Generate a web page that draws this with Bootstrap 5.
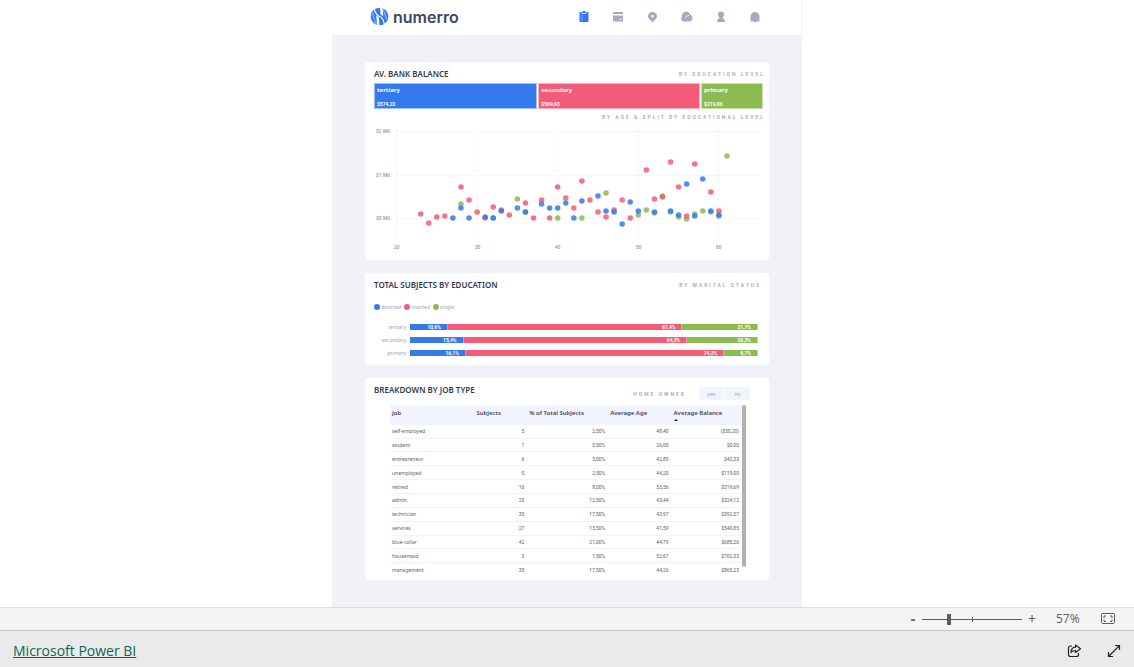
<!DOCTYPE html>
<html lang="en">
<head>
<meta charset="utf-8">
<meta name="viewport" content="width=device-width, initial-scale=1">
<title>Numerro - Microsoft Power BI</title>
<link href="https://cdn.jsdelivr.net/npm/bootstrap@5.3.0/dist/css/bootstrap.min.css" rel="stylesheet">
<style>
:root{--blue:#347aee;--red:#f45b77;--green:#8cbc4f;--muted:#9aa3bd;--ink:#3b3f55}
body{font-family:"Noto Sans","Open Sans",sans-serif;background:#fff;color:var(--ink)}
.report{max-width:470px;background:#f0f2f8;padding-bottom:26px}
.topbar{background:#fff;height:35px;padding:0 39px 2px 38px;border-right:1px solid #eef0f6}
.brand{font:600 16px/20px Inter,sans-serif;color:#3d4466;gap:4px;text-decoration:none}
.tabs{gap:20px}
.tabs a{display:block;width:14px;height:14px;line-height:0;color:#a5abbd}
.tabs a.current{color:var(--blue)}
.panels{padding:27px 33px 0;gap:13px}
.panel{background:#fff;border-radius:3px;padding:0 6px 0 9px}
.panel h2{font-size:8px;line-height:12px;font-weight:600;margin:0;color:#33384d}
.panel-head{padding-top:6px}
.balance-head{padding-bottom:3px}
.caption-text{font:500 5px/8px Roboto,sans-serif;letter-spacing:2px;margin-right:-2px;color:var(--muted);text-transform:uppercase;white-space:nowrap}
.tree{height:26px;gap:1px}
.tree div{padding:2px 2px 0;border:1px solid #ffffff88;color:#fff;font-size:6px;line-height:8px;font-weight:700;display:flex;flex-direction:column;justify-content:space-between;min-width:0}
.tree span{font:700 5px/8px Roboto,sans-serif}
.fill-blue{background-color:var(--blue)}.fill-red{background-color:var(--red)}.fill-green{background-color:var(--green)}
.plot text{font:500 5px Roboto,sans-serif;fill:#8d96b3}
.plot line{stroke:#e4e5e9;stroke-dasharray:1 3}
.key{gap:3px;font-size:5px;line-height:8px;color:var(--muted)}
.key i{display:inline-block;width:6px;height:6px;border-radius:50%;margin-right:1px;vertical-align:-1px}
.stacks{display:grid;grid-template-columns:32px 1fr;column-gap:4px;row-gap:5px;padding-right:5px;font-size:5px;line-height:8px;color:var(--muted);text-align:right}
.stack-bar{height:8px;padding:1px 0}
.stack-bar div{color:#fff;font:700 5px/6px Roboto,sans-serif;padding-right:6px;border-right:1px solid #ffffff66}
.home{gap:1px;height:16px;padding:3px 13px 0 0}
.home .caption-text{margin-right:12px}
.home button{border:0;border-radius:0;background:#f1f3fe;color:var(--muted);font-size:5px;line-height:8px;width:25px;height:13px;padding:0}
.job-area{padding:5px 17px 4px 16px}
.jobs{height:171px;flex:1;font-size:5px;line-height:8px;border-collapse:collapse;table-layout:fixed;color:#5b5e69}
.jobs th{background:#f1f3fe;height:20px;padding:0 2px;font-size:6px;font-weight:600;color:#41455c;position:relative;white-space:nowrap}
.jobs thead th{padding-bottom:4px}
.jobs th svg{position:absolute;left:2px;bottom:4px}
.jobs td{padding:0 3px;text-align:right;font:400 5px/8px Roboto,sans-serif;border-bottom:1px solid #f1f3fb}
.jobs tbody th{background:none;height:auto;font-size:5px;font-weight:400;color:#5b5e69;border-bottom:1px solid #f1f3fb}
.jobs tr:last-child>td,.jobs tbody tr:last-child>th{border-bottom:0}
.scroll-rail{width:4px;height:162px;border-radius:2px;background:#b3b0ad}
.zoombar{height:24px;background:#f4f4f4;border-top:1px solid #dcdcdc;border-bottom:1px solid #c6c6c6;padding-right:19px;color:#605e5c}
.zoombar button,.embedbar button{border:0;background:none;padding:0;color:inherit;line-height:0}
.zoombar .step{font-size:14px;line-height:20px;width:10px}
.zoom-range{-webkit-appearance:none;appearance:none;width:100px;height:11px;margin:0 5px 0 4px;background:linear-gradient(#605e5c,#605e5c) 50% 50%/1px 5px no-repeat,linear-gradient(#605e5c,#605e5c) 0 50%/100% 1px no-repeat}
.zoom-range::-webkit-slider-thumb{-webkit-appearance:none;width:4px;height:11px;background:#605e5c}
.zoombar output{font:400 12px/20px "Open Sans",sans-serif;width:26px;margin:0 19px;color:#605e5c}
.embedbar{height:36px;background:#eaeaea;padding:3px 13px 0;color:#222}
.embedbar a{font:400 14px/18px "Open Sans",sans-serif;color:#0b6657}
</style>
</head>
<body class="d-flex flex-column min-vh-100">
<main class="flex-grow-1 d-flex justify-content-center">
 <div class="report w-100">
  <header class="topbar d-flex align-items-center justify-content-between">
   <a class="brand d-flex align-items-center" href="#">
    <svg width="19" height="19" viewBox="0 0 19 19" aria-hidden="true"><defs><clipPath id="disc"><circle cx="9.500" cy="9.500" r="8.800"/></clipPath></defs><g clip-path="url(#disc)"><path fill="#347aee" d="M0 0h19v19H0z"/><path fill="#fff" d="M6.200 8.500l2.600 1.800L9.500 19H7.200zM10 0h2.400l.8 9-2.600-1.500z"/><path fill="none" stroke="#fff" stroke-width="1.100" d="M4 1.500C5.500 7 8 9 9.700 9.500S13.500 12 14.500 18"/><path fill="none" stroke="#c4daff" stroke-width=".8" d="M2.500 6c1 5 2 8 4.500 12M12 1c2.500 4 3.500 7 4.500 11"/></g></svg>
    numerro</a>
   <nav class="tabs d-flex" aria-label="Report pages">
    <a class="current" href="#" aria-label="Overview"><svg width="14" height="14" viewBox="0 0 14 14"><path fill="currentColor" d="M1.500 2h9v10h-9z"/><path stroke="#d8e5ff" d="M4 1v2.500h4V1" fill="none"/><path stroke="#8fb8f8" stroke-width=".8" d="M4 5v6" fill="none"/><path fill="currentColor" d="M4.500 1h3v2h-3z"/></svg></a>
    <a href="#" aria-label="Cards"><svg width="14" height="14" viewBox="0 0 14 14"><path fill="currentColor" d="M1 2h10v2H1zM1 5.500h10v6H1z"/><path fill="#eceef4" d="M7.500 8.500h2v1.500h-2z"/></svg></a>
    <a href="#" aria-label="Locations"><svg width="14" height="14" viewBox="0 0 14 14"><path fill="currentColor" fill-rule="evenodd" d="M6.500 2C3.800 2 2 3.800 2 6.200c0 2.600 3 3.800 4.500 6.300C8 10 11 8.800 11 6.200 11 3.800 9.200 2 6.500 2zm0 3a1.300 1.300 0 1 1 0 2.600 1.300 1.300 0 0 1 0-2.600z"/></svg></a>
    <a href="#" aria-label="Cloud"><svg width="14" height="14" viewBox="0 0 14 14"><path fill="currentColor" d="M4 11.500a2.700 2.700 0 0 1-2-4.700 4 4 0 0 1 8-2.300 3.700 3.700 0 0 1 .2 7z"/><path fill="none" stroke="#fff" stroke-width=".9" d="M5.500 8c.3-1.300 1.500-2.300 3.500-2.600"/></svg></a>
    <a href="#" aria-label="Profile"><svg width="14" height="14" viewBox="0 0 14 14"><circle cx="7" cy="4.500" r="3" fill="currentColor"/><path fill="currentColor" d="M5.500 6.500h3L9 8.500c1.300.6 2 1.500 2 3.500H3c0-2 .7-2.900 2-3.500z"/></svg></a>
    <a href="#" aria-label="Alerts"><svg width="14" height="14" viewBox="0 0 14 14"><path fill="currentColor" d="M2.500 11.500v-5C2.500 3.800 4.500 2 7 2s4.500 1.800 4.500 4.500v5zM5.800 11.500h2.500L7 13z"/></svg></a>
   </nav>
  </header>

  <div class="panels d-flex flex-column">
   <section class="panel pb-2">
    <div class="panel-head balance-head d-flex justify-content-between align-items-center">
     <h2 class="flex-shrink-0">AV. BANK BALANCE</h2><span class="caption-text">By education level</span>
    </div>
    <div class="tree d-flex">
     <div class="fill-blue" style="width:42.2%">tertiary<span>$574,22</span></div>
     <div class="fill-red" style="width:41.8%">secondary<span>$569,93</span></div>
     <div class="fill-green" style="width:16%">primary<span>$219,86</span></div>
    </div>
    <div class="caption-text text-end pt-1">By age &amp; split by educational level</div>
    <svg class="plot d-block w-100" viewBox="374 121 389 131" role="img" aria-label="Balance by age and education level">
     <g id="grid"></g><g id="dots" fill-opacity=".85"></g>
    </svg>
   </section>

   <section class="panel pb-2">
    <div class="panel-head d-flex justify-content-between align-items-center pe-1">
     <h2>TOTAL SUBJECTS BY EDUCATION</h2><span class="caption-text">By marital status</span>
    </div>
    <div class="key d-flex mt-2 pt-1"><span><i class="fill-blue"></i>divorced</span><span><i class="fill-red"></i>married</span><span><i class="fill-green"></i>single</span></div>
    <div class="stacks mt-2 pt-1" id="stacks"></div>
   </section>

   <section class="panel">
    <div class="panel-head d-flex justify-content-between">
     <h2>BREAKDOWN BY JOB TYPE</h2>
     <div class="home d-flex align-items-center" role="group" aria-label="Home owner">
      <span class="caption-text">Home owner</span>
      <button type="button">yes</button><button type="button">no</button>
     </div>
    </div>
    <div class="job-area d-flex">
     <table class="jobs">
      <colgroup><col style="width:24%"><col style="width:15%"><col style="width:23%"><col style="width:18%"><col style="width:20%"></colgroup>
      <thead><tr><th scope="col">job</th><th scope="col">Subjects</th><th scope="col">% of Total Subjects</th><th scope="col">Average Age</th><th scope="col" aria-sort="ascending">Average Balance<svg width="4" height="2" viewBox="0 0 4 2"><path d="M0 2l2-2 2 2z" fill="#222"/></svg></th></tr></thead>
      <tbody>
       <tr><th scope="row">self-employed</th><td>5</td><td>2,50%</td><td>48,40</td><td>($50,20)</td></tr>
       <tr><th scope="row">student</th><td>1</td><td>0,50%</td><td>26,00</td><td>$0,00</td></tr>
       <tr><th scope="row">entrepreneur</th><td>6</td><td>3,00%</td><td>42,83</td><td>$42,33</td></tr>
       <tr><th scope="row">unemployed</th><td>5</td><td>2,50%</td><td>44,20</td><td>$119,00</td></tr>
       <tr><th scope="row">retired</th><td>16</td><td>8,00%</td><td>53,56</td><td>$319,69</td></tr>
       <tr><th scope="row">admin.</th><td>25</td><td>12,50%</td><td>43,44</td><td>$324,12</td></tr>
       <tr><th scope="row">technician</th><td>35</td><td>17,50%</td><td>43,97</td><td>$392,57</td></tr>
       <tr><th scope="row">services</th><td>27</td><td>13,50%</td><td>41,59</td><td>$540,85</td></tr>
       <tr><th scope="row">blue-collar</th><td>42</td><td>21,00%</td><td>44,79</td><td>$685,26</td></tr>
       <tr><th scope="row">housemaid</th><td>3</td><td>1,50%</td><td>52,67</td><td>$702,33</td></tr>
       <tr><th scope="row">management</th><td>35</td><td>17,50%</td><td>44,26</td><td>$865,23</td></tr>
      </tbody>
     </table>
     <div class="scroll-rail"></div>
    </div>
   </section>
  </div>
 </div>
</main>

<div class="zoombar d-flex align-items-center justify-content-end">
 <button type="button" class="step fw-bold" aria-label="Zoom out">-</button>
 <input class="zoom-range" id="zoom" type="range" min="0" max="100" value="26" aria-label="Zoom level">
 <button type="button" class="step" aria-label="Zoom in">+</button>
 <output for="zoom">57%</output>
 <button type="button" aria-label="Fit to page"><svg width="14" height="12" viewBox="0 0 14 12" fill="none" stroke="#605e5c"><rect x=".5" y=".5" width="13" height="10" rx="1"/><path d="M3 5V3h2M3 6.500v2h2M11 5V3H9M11 6.500v2H9"/></svg></button>
</div>
<footer class="embedbar d-flex align-items-center justify-content-between">
 <a href="#">Microsoft Power BI</a>
 <div class="d-flex gap-4">
  <button type="button" aria-label="Share"><svg width="16" height="14" viewBox="0 0 16 14" fill="none" stroke="currentColor" stroke-width="1.200"><path d="M5 2H3.500a2 2 0 0 0-2 2v6.500a2 2 0 0 0 2 2h6a2 2 0 0 0 2-2V9"/><path d="M8.500 1l5 3.800-5 3.800V6.500C6.500 6.500 5 7 4 8.500c0-3 1.500-5.300 4.500-5.300z" stroke-linejoin="round"/></svg></button>
  <button type="button" aria-label="Full screen"><svg width="14" height="14" viewBox="0 0 14 14" fill="none" stroke="currentColor" stroke-width="1.200"><path d="M1.500 12.500l11-11M8 1.500h4.500V6M1.500 8v4.500H6"/></svg></button>
 </div>
</footer>

<script>
const pts = {
 '#8cbc4f': {28:204,32:218,35:199,36:212,40:218,43:218,46:193,50:215,51:210,52:213,53:196,54:212,55:217,56:219,57:214,58:211,59:212,60:216,61:156},
 '#f45b77': {23:214,24:223,25:217,26:216,28:187,29:200,30:212,31:218,32:207,33:210,34:215,36:203,37:218,38:200,39:218,40:187,41:198,42:208,43:181,44:200,45:212,46:217,47:210,48:200,49:218,51:170,52:199,53:197,54:162,55:187,56:216,57:164,59:192,60:211},
 '#347aee': {27:218,28:208,29:218,31:217,32:218,33:211,35:208,36:212,38:204,39:208,40:208,41:203,42:218,43:201,45:196,46:211,47:212,48:224,49:202,50:211,52:212,54:211,55:215,56:184,57:216,58:179,59:211,60:215}
};
const xAt = age => 396.5 + (age - 20) * 8.06;
let dots = '', grid = '';
for (const [color, set] of Object.entries(pts))
 for (const [age, y] of Object.entries(set))
  dots += `<circle cx="${xAt(+age)}" cy="${y}" r="2.8" fill="${color}"/>`;
[[2,131.5],[1,175.5],[0,218.5]].forEach(([v, y]) => {
 grid += `<line x1="397" x2="760" y1="${y}" y2="${y}"/><text x="376" y="${y + 1.5}">$${v} Mil.</text>`;
});
[20,30,40,50,60].forEach(a => {
 const x = Math.floor(xAt(a)) + .5;
 grid += `<line x1="${x}" x2="${x}" y1="131" y2="241"/><text x="${x}" y="249" text-anchor="middle">${a}</text>`;
});
document.getElementById('dots').innerHTML = dots;
document.getElementById('grid').innerHTML = grid;
document.getElementById('stacks').innerHTML = [['tertiary',10.9,67.4,21.7],['secondary',15.4,64.3,20.3],['primary',16.1,74.2,9.7]].map(([name, ...vals]) =>
 `<span>${name}</span><div class="stack-bar d-flex">${vals.map((v, i) => `<div class="fill-${['blue','red','green'][i]}" style="width:${v}%">${v.toFixed(1).replace('.', ',')}%</div>`).join('')}</div>`).join('');
</script>
<script src="https://cdn.jsdelivr.net/npm/bootstrap@5.3.0/dist/js/bootstrap.bundle.min.js"></script>
</body>
</html>
